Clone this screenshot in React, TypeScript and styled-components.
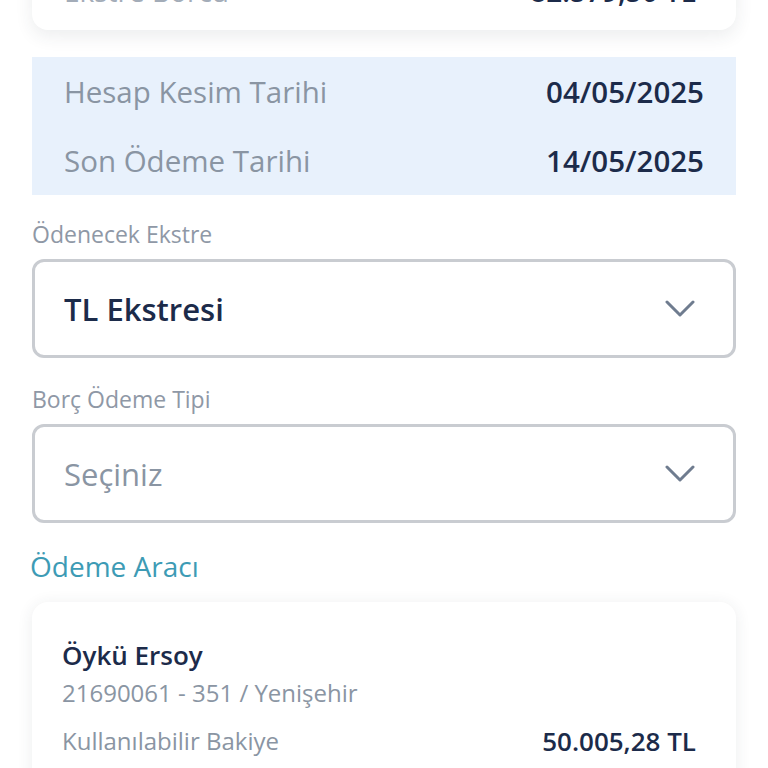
import React from "react";
import styled, { createGlobalStyle } from "styled-components";

const Global = createGlobalStyle`
  html, body { margin: 0; padding: 0; background: #ffffff; }
  body { font-family: "Open Sans", "Noto Sans", sans-serif; -webkit-font-smoothing: antialiased; }
  * { box-sizing: border-box; }
`;

const Page = styled.div`
  width: 768px;
  height: 768px;
  overflow: hidden;
  padding: 0 32px;
  display: flex;
  flex-direction: column;
  & > * { flex-shrink: 0; }
`;

const SummaryCard = styled.div`
  margin-top: -60px;
  height: 90px;
  background: #fff;
  border-radius: 16px;
  box-shadow: 0 6px 18px rgba(40, 50, 70, 0.09);
  display: flex;
  align-items: flex-end;
  justify-content: space-between;
  padding: 0 40px 25px 32px;
`;

const SummaryLabel = styled.span`
  font-size: 28px;
  line-height: 28px;
  color: #a3acb8;
`;

const SummaryValue = styled.span`
  font-size: 28px;
  line-height: 28px;
  font-weight: 600;
  color: #1c2b4a;
`;

const InfoPanel = styled.div`
  margin-top: 27px;
  background: #e8f1fc;
  padding: 0 32px;
  display: flex;
  flex-direction: column;
`;

const InfoRow = styled.div`
  height: 69px;
  display: flex;
  align-items: center;
  justify-content: space-between;
`;

const InfoLabel = styled.span`
  font-size: 29.5px;
  color: #8a95a3;
`;

const InfoValue = styled.span`
  font-size: 29.5px;
  font-weight: 600;
  color: #1c2b4a;
`;

const FieldLabel = styled.div<{ $gap: number }>`
  margin-top: ${(p) => p.$gap}px;
  font-size: 23px;
  line-height: 30px;
  color: #8f98a6;
`;

const SelectBox = styled.div`
  margin-top: 10px;
  height: 99px;
  border: 3px solid #c9ccd1;
  border-radius: 12px;
  display: flex;
  align-items: center;
  justify-content: space-between;
  padding: 0 37px 0 29px;
`;

const SelectText = styled.span<{ $placeholder?: boolean }>`
  font-size: 31px;
  font-weight: ${(p) => (p.$placeholder ? 400 : 600)};
  color: ${(p) => (p.$placeholder ? "#8a95a3" : "#1c2b4a")};
`;

const SectionTitle = styled.div`
  margin-top: 25px;
  margin-left: -2px;
  font-size: 28px;
  line-height: 36px;
  color: #3d9bb5;
`;

const AccountCard = styled.div`
  margin-top: 18px;
  background: #fff;
  border-radius: 16px;
  box-shadow: 0 2px 16px rgba(40, 50, 70, 0.09);
  padding: 35px 40px 20px 30px;
  display: flex;
  flex-direction: column;
`;

const AccountName = styled.div`
  font-size: 26px;
  font-weight: 600;
  line-height: 36px;
  color: #1c2b4a;
`;

const AccountSub = styled.div`
  font-size: 24px;
  line-height: 40px;
  color: #8a95a3;
`;

const BalanceRow = styled.div`
  display: flex;
  justify-content: space-between;
  align-items: center;
  height: 56px;
`;

const BalanceValue = styled.span`
  font-size: 26px;
  font-weight: 600;
  color: #1c2b4a;
`;

const Chevron = () => (
  <svg width="32" height="18" viewBox="0 0 32 18" fill="none">
    <path d="M3 2 L16 15 L29 2" stroke="#6f7c8f" strokeWidth="3" strokeLinecap="round" strokeLinejoin="round" />
  </svg>
);

export default function App() {
  return (
    <>
      <Global />
      <Page>
        <SummaryCard>
          <SummaryLabel>Ekstre Borcu</SummaryLabel>
          <SummaryValue>82.579,50 TL</SummaryValue>
        </SummaryCard>
        <InfoPanel>
          <InfoRow>
            <InfoLabel>Hesap Kesim Tarihi</InfoLabel>
            <InfoValue>04/05/2025</InfoValue>
          </InfoRow>
          <InfoRow>
            <InfoLabel>Son Ödeme Tarihi</InfoLabel>
            <InfoValue>14/05/2025</InfoValue>
          </InfoRow>
        </InfoPanel>
        <FieldLabel $gap={24}>Ödenecek Ekstre</FieldLabel>
        <SelectBox>
          <SelectText>TL Ekstresi</SelectText>
          <Chevron />
        </SelectBox>
        <FieldLabel $gap={26}>Borç Ödeme Tipi</FieldLabel>
        <SelectBox>
          <SelectText $placeholder>Seçiniz</SelectText>
          <Chevron />
        </SelectBox>
        <SectionTitle>Ödeme Aracı</SectionTitle>
        <AccountCard>
          <AccountName>Öykü Ersoy</AccountName>
          <AccountSub>21690061 - 351 / Yenişehir</AccountSub>
          <BalanceRow>
            <AccountSub>Kullanılabilir Bakiye</AccountSub>
            <BalanceValue>50.005,28 TL</BalanceValue>
          </BalanceRow>
        </AccountCard>
      </Page>
    </>
  );
}
